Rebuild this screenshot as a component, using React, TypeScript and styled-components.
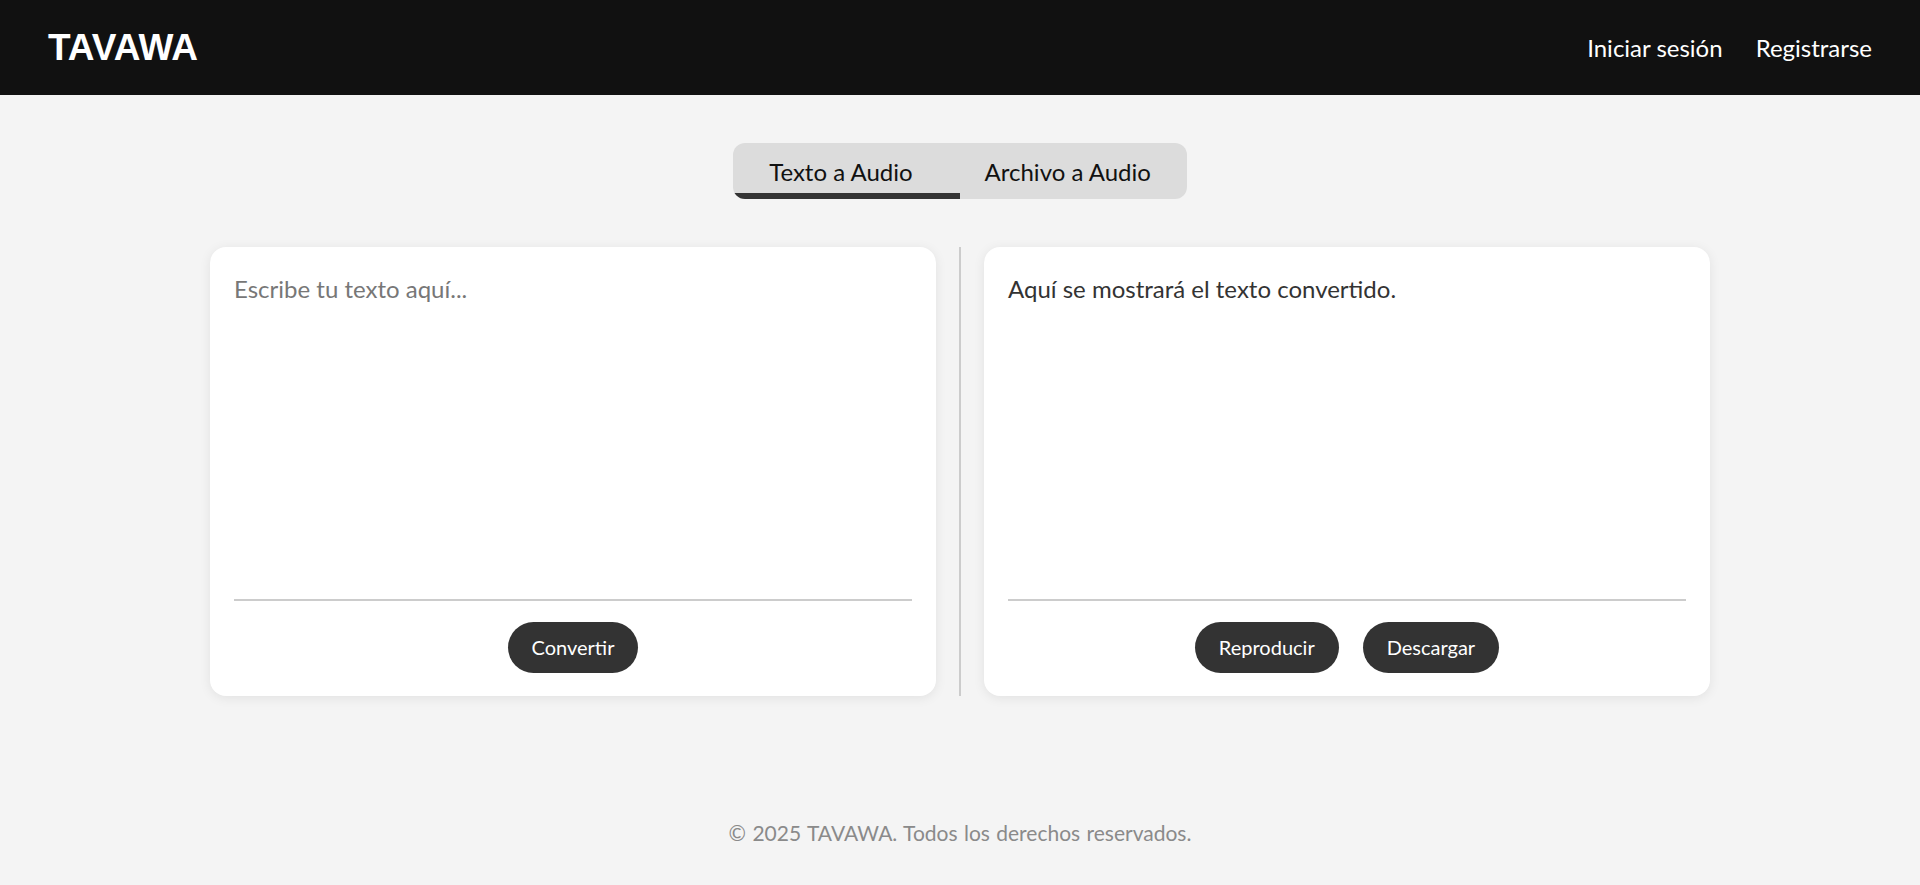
import React, { useState } from "react";
import styled, { createGlobalStyle } from "styled-components";

const GlobalStyle = createGlobalStyle`
  * { box-sizing: border-box; }
  html, body { margin: 0; padding: 0; }
  body {
    background: #f4f4f4;
    font-family: Lato, "Open Sans", sans-serif;
    color: #222;
  }
`;

const tabs = ["Texto a Audio", "Archivo a Audio"];

const App = () => {
  const [active, setActive] = useState(0);
  const [text, setText] = useState("");

  return (
    <Page>
      <GlobalStyle />
      <Header>
        <Logo>TAVAWA</Logo>
        <Nav>
          <NavLink href="#">Iniciar sesión</NavLink>
          <NavLink href="#">Registrarse</NavLink>
        </Nav>
      </Header>

      <Main>
        <TabBar>
          {tabs.map((t, i) => (
            <Tab key={t} onClick={() => setActive(i)}>
              {t}
            </Tab>
          ))}
          <Indicator $index={active} />
        </TabBar>

        <Panels>
          <Card>
            <TextInput
              placeholder="Escribe tu texto aquí..."
              value={text}
              onChange={(e) => setText(e.target.value)}
            />
            <Actions>
              <Button>Convertir</Button>
            </Actions>
          </Card>
          <Divider />
          <Card>
            <Output>Aquí se mostrará el texto convertido.</Output>
            <Actions>
              <Button>Reproducir</Button>
              <Button>Descargar</Button>
            </Actions>
          </Card>
        </Panels>
      </Main>

      <Footer>© 2025 TAVAWA. Todos los derechos reservados.</Footer>
    </Page>
  );
};

const Page = styled.div`
  min-height: 100vh;
  display: flex;
  flex-direction: column;
`;

const Header = styled.header`
  height: 95px;
  background: #111;
  display: flex;
  align-items: center;
  justify-content: space-between;
  padding: 0 48px;
`;

const Logo = styled.div`
  font-family: "Liberation Sans", Arial, sans-serif;
  font-weight: 700;
  font-size: 37px;
  color: #fff;
  line-height: 1;
`;

const Nav = styled.nav`
  display: flex;
  align-items: center;
  gap: 33px;
`;

const NavLink = styled.a`
  color: #fff;
  text-decoration: none;
  font-size: 24px;
  line-height: 32px;
`;

const Main = styled.main`
  flex: 1;
  display: flex;
  flex-direction: column;
  align-items: center;
  padding-top: 48px;
`;

const TabBar = styled.div`
  position: relative;
  display: inline-flex;
  background: #dcdcdc;
  border-radius: 12px;
  overflow: hidden;
`;

const Tab = styled.button`
  background: transparent;
  border: none;
  font-family: inherit;
  font-size: 24px;
  line-height: 32px;
  color: #111;
  padding: 13px 36px 11px;
  cursor: pointer;
`;

const Indicator = styled.span<{ $index: number }>`
  position: absolute;
  bottom: 0;
  left: ${(p) => p.$index * 50}%;
  width: 50%;
  height: 6px;
  background: #333;
  transition: left 0.2s;
`;

const Panels = styled.section`
  width: 1500px;
  margin-top: 48px;
  display: flex;
  align-items: stretch;
  gap: 23px;
`;

const Card = styled.div`
  flex: 1;
  background: #fff;
  border-radius: 16px;
  box-shadow: 0 2px 12px rgba(0, 0, 0, 0.08);
  padding: 25px 24px 23px;
  display: flex;
  flex-direction: column;
`;

const Divider = styled.div`
  width: 2px;
  background: #ccc;
`;

const TextInput = styled.textarea`
  width: 100%;
  height: 329px;
  resize: none;
  border: none;
  border-bottom: 2px solid #ccc;
  outline: none;
  padding: 0;
  font-family: inherit;
  font-size: 24px;
  line-height: 1.4;
  color: #333;
  background: transparent;

  &::placeholder {
    color: #777;
  }
`;

const Output = styled.div`
  height: 329px;
  border-bottom: 2px solid #ccc;
  font-size: 24px;
  line-height: 1.4;
  color: #333;
`;

const Actions = styled.div`
  margin-top: 21px;
  display: flex;
  justify-content: center;
  gap: 24px;
`;

const Button = styled.button`
  background: #333;
  color: #fff;
  border: none;
  border-radius: 26px;
  padding: 12px 24px;
  font-family: inherit;
  font-size: 20px;
  line-height: 27px;
  cursor: pointer;
`;

const Footer = styled.footer`
  text-align: center;
  padding: 24px 0 39px;
  color: #8a8a8a;
  font-size: 21px;
  word-spacing: 1px;
  line-height: 27px;
`;

export default App;
